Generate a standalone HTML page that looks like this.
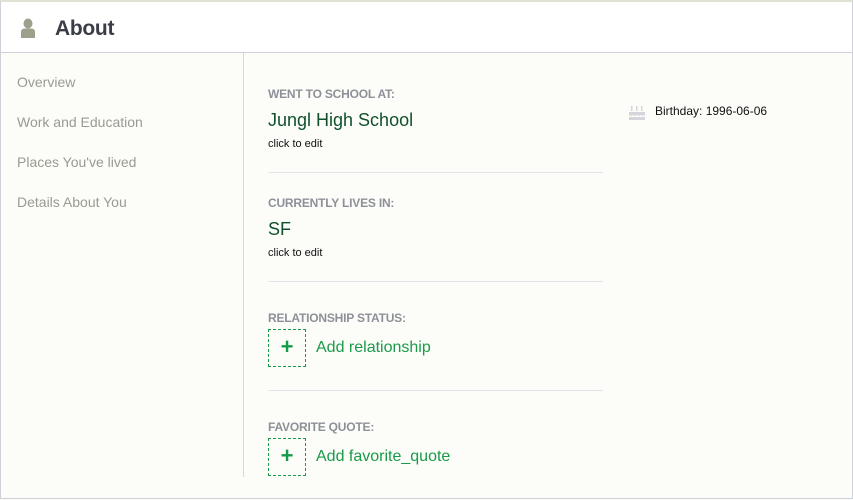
<!DOCTYPE html>
<html><head><style>
*{margin:0;padding:0;box-sizing:border-box}
body{width:853px;height:500px;background:#fcfdf8;font-family:"Liberation Sans",Arial,sans-serif;position:relative;overflow:hidden}
.frame{position:absolute;left:0;top:0;width:853px;height:499px;border:1px solid #cfd1d8;border-top:2px solid #dfe3d2;}
.hdr{position:absolute;left:1px;top:2px;width:851px;height:51px;background:#fff;border-bottom:1px solid #cfd1d8}
.hdr h1{position:absolute;left:54px;top:15px;font-size:21px;font-weight:bold;color:#3a3d48;letter-spacing:-0.3px}
.side{position:absolute;left:243px;top:53px;width:1px;height:424px;background:#d6d8dc}
.nav{position:absolute;left:17px;font-size:14px;color:#9a9a92}
.lbl{position:absolute;left:268px;font-size:12px;font-weight:bold;color:#8e9099;letter-spacing:-0.2px}
.val{position:absolute;left:268px;font-size:18px;color:#10502a}
.ce{position:absolute;left:268px;font-size:11px;color:#111}
.hr{position:absolute;left:268px;width:335px;height:1px;background:#e3e5e8}
.add{position:absolute;left:268px;width:38px;height:38px;border:1px dashed #1a9a4a;color:#159a48;font-size:22px;font-weight:bold;text-align:center;line-height:34px}
.addt{position:absolute;left:316px;font-size:16px;color:#1a9a4a}
</style></head><body>
<div class="frame"></div>
<div class="hdr">
<svg style="position:absolute;left:19px;top:16px" width="16" height="20" viewBox="0 0 16 20"><ellipse cx="8" cy="5.5" rx="4.5" ry="5" fill="#9ea08c"/><path d="M1 20 V14 Q1 10.5 5 10.5 H11 Q15 10.5 15 14 V20 Z" fill="#9ea08c"/></svg>
<h1>About</h1></div>
<div class="side"></div>
<div class="nav" style="top:74px">Overview</div>
<div class="nav" style="top:114px">Work and Education</div>
<div class="nav" style="top:154px">Places You've lived</div>
<div class="nav" style="top:194px">Details About You</div>

<div class="lbl" style="top:87px">WENT TO SCHOOL AT:</div>
<div class="val" style="top:110px">Jungl High School</div>
<div class="ce" style="top:138px">click to edit</div>
<div class="hr" style="top:172px"></div>
<div class="lbl" style="top:196px">CURRENTLY LIVES IN:</div>
<div class="val" style="top:219px">SF</div>
<div class="ce" style="top:247px">click to edit</div>
<div class="hr" style="top:281px"></div>
<div class="lbl" style="top:311px">RELATIONSHIP STATUS:</div>
<div class="add" style="top:329px">+</div>
<div class="addt" style="top:339px">Add relationship</div>
<div class="hr" style="top:390px"></div>
<div class="lbl" style="top:420px">FAVORITE QUOTE:</div>
<div class="add" style="top:438px">+</div>
<div class="addt" style="top:448px">Add favorite_quote</div>

<svg style="position:absolute;left:629px;top:104px" width="16" height="16" viewBox="0 0 16 16" fill="#d4d6dc"><rect x="2" y="2" width="1.5" height="5"/><rect x="7" y="2" width="1.5" height="5"/><rect x="12" y="2" width="1.5" height="5"/><path d="M0 8 H16 V11 Q14 12.5 12 11 Q10 12.5 8 11 Q6 12.5 4 11 Q2 12.5 0 11Z"/><rect x="0" y="13" width="16" height="3"/></svg>
<div style="position:absolute;left:655px;top:104px;font-size:12px;color:#111">Birthday: 1996-06-06</div>
</body></html>
